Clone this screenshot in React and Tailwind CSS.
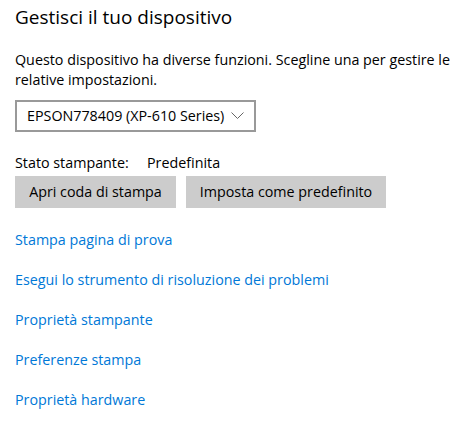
export default function App() {
  const links = [
    "Stampa pagina di prova",
    "Esegui lo strumento di risoluzione dei problemi",
    "Proprietà stampante",
    "Preferenze stampa",
    "Proprietà hardware",
  ];
  return (
    <div
      className="w-[475px] h-[423px] bg-white text-black px-[15px] overflow-hidden"
      style={{ fontFamily: '"Open Sans", "Noto Sans", sans-serif' }}
    >
      <h1 className="text-[19px] leading-[28px] pt-[3px] font-normal">Gestisci il tuo dispositivo</h1>
      <p className="text-[14.3px] leading-[20px] mt-[19px] pr-[5px]">
        Questo dispositivo ha diverse funzioni. Scegline una per gestire le relative impostazioni.
      </p>
      <div className="mt-[10px] w-[241px] h-[32px] border-2 border-[#999999] flex items-center justify-between pl-[10px] pr-[10px] text-[14.3px]">
        <span>EPSON778409 (XP-610 Series)</span>
        <svg width="13" height="8" viewBox="0 0 13 8" fill="none">
          <path d="M0.5 0.5L6.5 6.5L12.5 0.5" stroke="#666" strokeWidth="1" />
        </svg>
      </div>
      <div className="mt-[21px] flex text-[14.3px] leading-[20px]">
        <span className="w-[132px]">Stato stampante:</span>
        <span>Predefinita</span>
      </div>
      <div className="mt-[3px] flex gap-[10px] text-[14.3px]">
        <button className="h-[32px] w-[161px] bg-[#cccccc]">Apri coda di stampa</button>
        <button className="h-[32px] w-[200px] bg-[#cccccc]">Imposta come predefinito</button>
      </div>
      <div className="mt-[22px] flex flex-col gap-[20px]">
        {links.map((l) => (
          <a key={l} className="text-[14.3px] leading-[20px] text-[#0078d7] cursor-pointer">
            {l}
          </a>
        ))}
      </div>
    </div>
  );
}
